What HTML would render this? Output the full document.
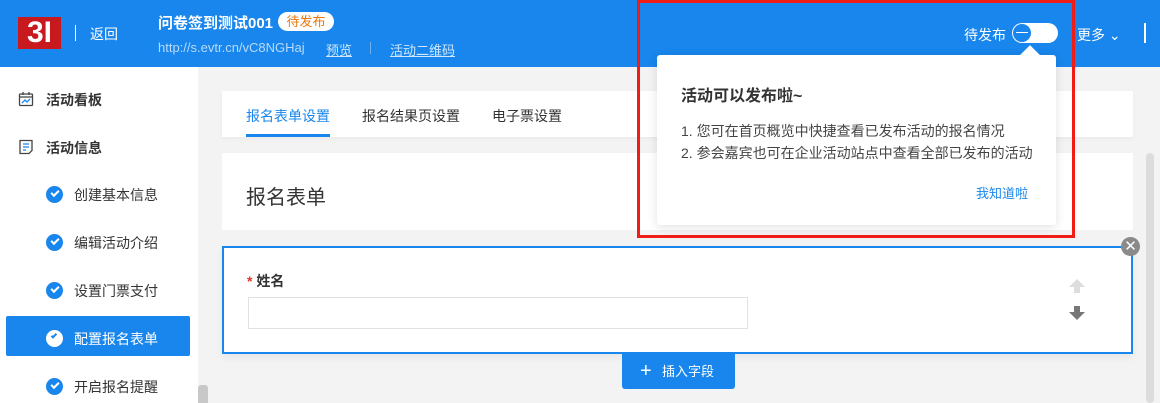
<!DOCTYPE html>
<html><head><meta charset="utf-8"><style>
*{margin:0;padding:0;box-sizing:border-box}
body{width:1160px;height:403px;overflow:hidden;background:#f3f3f3;font-family:"Liberation Sans","Noto Sans CJK SC",sans-serif;position:relative;color:#333}
.a{position:absolute}
.hd{left:0;top:0;width:1160px;height:67px;background:#1886ec;color:#fff}
.sb{left:0;top:67px;width:198px;height:336px;background:#fff}
.nav{font-size:14px;color:#333}
.ck{width:17px;height:17px;border-radius:50%;background:#1886ec}
.ck:after{content:"";position:absolute;left:5px;top:4px;width:6px;height:3px;border-left:2px solid #fff;border-bottom:2px solid #fff;transform:rotate(-45deg)}
</style></head><body>
<div class="a hd">
 <div class="a" style="left:18px;top:17px;width:43px;height:32px;background:#c8191f;color:#fff;font:bold 30px/32px 'Liberation Sans',sans-serif;text-align:center;letter-spacing:0">3I</div>
 <div class="a" style="left:75px;top:25px;width:1px;height:16px;background:#fff"></div>
 <div class="a" style="left:90px;top:24px;font-size:14px">返回</div>
 <div class="a" style="left:158px;top:12px;font-size:15px;font-weight:bold">问卷签到测试001</div>
 <div class="a" style="left:278px;top:12px;width:56px;height:19px;border-radius:10px;background:#fff;color:#e8780f;font-size:13px;line-height:19px;text-align:center">待发布</div>
 <div class="a" style="left:158px;top:40px;font-size:13px;color:#b8dafb">http://s.evtr.cn/vC8NGHaj</div>
 <div class="a" style="left:326px;top:40px;font-size:13px;color:#d0e7fd;text-decoration:underline">预览</div>
 <div class="a" style="left:370px;top:42px;width:1px;height:12px;background:#6fb0f1"></div>
 <div class="a" style="left:390px;top:40px;font-size:13px;color:#d0e7fd;text-decoration:underline">活动二维码</div>
 <div class="a" style="left:964px;top:25px;font-size:14px">待发布</div>
 <div class="a" style="left:1012px;top:23px;width:46px;height:20px;border-radius:10px;background:#fff"></div>
 <div class="a" style="left:1013px;top:24px;width:18px;height:18px;border-radius:50%;background:#1886ec"></div>
 <div class="a" style="left:1016px;top:32px;width:12px;height:1px;background:#fff"></div>
 <div class="a" style="left:1077px;top:25px;font-size:14px">更多 ⌄</div>
 <div class="a" style="left:1144px;top:23px;width:2px;height:20px;background:#fff"></div>
</div>
<div class="a sb">
 <svg class="a" style="left:18px;top:24px" width="16" height="16" viewBox="0 0 16 16" fill="none" stroke="#444" stroke-width="1.3"><rect x="1.5" y="3" width="13" height="11.5" rx="1"/><path d="M5 1v3M11 1v3M1.5 6h13"/><path d="M4 12l3-3 2 2 3-3" stroke="#1886ec"/></svg>
 <div class="a nav" style="left:46px;top:23px;font-weight:bold">活动看板</div>
 <svg class="a" style="left:18px;top:72px" width="16" height="16" viewBox="0 0 16 16" fill="none" stroke="#444" stroke-width="1.3"><path d="M2 1.5h12v10l-3 3H2z"/><path d="M5 5h6M5 8h6M5 11h3" stroke="#1886ec"/></svg>
 <div class="a nav" style="left:46px;top:71px;font-weight:bold">活动信息</div>
 <div class="a ck" style="left:46px;top:119px"></div><div class="a nav" style="left:74px;top:118px">创建基本信息</div>
 <div class="a ck" style="left:46px;top:167px"></div><div class="a nav" style="left:74px;top:166px">编辑活动介绍</div>
 <div class="a ck" style="left:46px;top:215px"></div><div class="a nav" style="left:74px;top:214px">设置门票支付</div>
 <div class="a" style="left:6px;top:249px;width:184px;height:40px;background:#1886ec;border-radius:2px"></div>
 <div class="a ck" style="left:46px;top:263px;background:#fff"></div>
 <div class="a" style="left:51px;top:267px;width:6px;height:3px;border-left:2px solid #1886ec;border-bottom:2px solid #1886ec;transform:rotate(-45deg)"></div>
 <div class="a nav" style="left:74px;top:262px;color:#fff">配置报名表单</div>
 <div class="a ck" style="left:46px;top:311px"></div><div class="a nav" style="left:74px;top:310px">开启报名提醒</div>
</div>
<div class="a" style="left:198px;top:385px;width:10px;height:18px;background:#c8c8c8;border-radius:3px 3px 0 0"></div>
<div class="a" style="left:222px;top:91px;width:911px;height:46px;background:#fff;box-shadow:0 2px 4px rgba(0,0,0,.04)"></div>
<div class="a" style="left:246px;top:106px;font-size:14px;color:#1886ec">报名表单设置</div>
<div class="a" style="left:246px;top:134px;width:84px;height:3px;background:#1886ec"></div>
<div class="a" style="left:362px;top:106px;font-size:14px">报名结果页设置</div>
<div class="a" style="left:492px;top:106px;font-size:14px">电子票设置</div>
<div class="a" style="left:222px;top:153px;width:911px;height:77px;background:#fff"></div>
<div class="a" style="left:246px;top:181px;font-size:20px;color:#333">报名表单</div>
<div class="a" style="left:1146px;top:153px;width:8px;height:250px;background:#dcdcdc;border-radius:4px"></div>
<div class="a" style="left:222px;top:246px;width:911px;height:108px;background:#fff;border:2px solid #1886ec;box-shadow:0 4px 8px rgba(0,0,0,.05)"></div>
<div class="a" style="left:1121px;top:237px;width:19px;height:19px;border-radius:50%;background:#8a8a8a;color:#fff;font-size:15px;line-height:19px;text-align:center">✕</div>
<div class="a" style="left:247px;top:271px;font-size:14px;font-weight:bold"><span style="color:#e5332a">*</span> 姓名</div>
<div class="a" style="left:248px;top:297px;width:500px;height:32px;border:1px solid #e2e2e2;background:#fff"></div>
<svg class="a" style="left:1068px;top:278px" width="18" height="44" viewBox="0 0 18 44"><path d="M9 1l8 8h-5v6H6V9H1z" fill="#ddd"/><path d="M6 28h6v6h5l-8 8-8-8h5z" fill="#777"/></svg>
<div class="a" style="left:622px;top:354px;width:113px;height:35px;background:#1886ec;border-radius:0 0 3px 3px;color:#fff;font-size:13px;line-height:35px"><span style="position:absolute;left:18px;font-size:20px;font-weight:300">+</span><span style="position:absolute;left:40px">插入字段</span></div>
<div class="a" style="left:637px;top:0;width:438px;height:238px;border:3px solid #f01d16"></div>
<div class="a" style="left:657px;top:55px;width:399px;height:170px;background:#fff;border-radius:3px;box-shadow:0 2px 10px rgba(0,0,0,.12)"></div>
<div class="a" style="left:1023px;top:48px;width:14px;height:14px;background:#fff;transform:rotate(45deg)"></div>
<div class="a" style="left:681px;top:82px;font-size:16px;font-weight:bold">活动可以发布啦~</div>
<div class="a" style="left:681px;top:120px;font-size:14px;line-height:22px;color:#444">1. 您可在首页概览中快捷查看已发布活动的报名情况<br>2. 参会嘉宾也可在企业活动站点中查看全部已发布的活动</div>
<div class="a" style="left:976px;top:183px;font-size:13px;color:#1886ec">我知道啦</div>
</body></html>
